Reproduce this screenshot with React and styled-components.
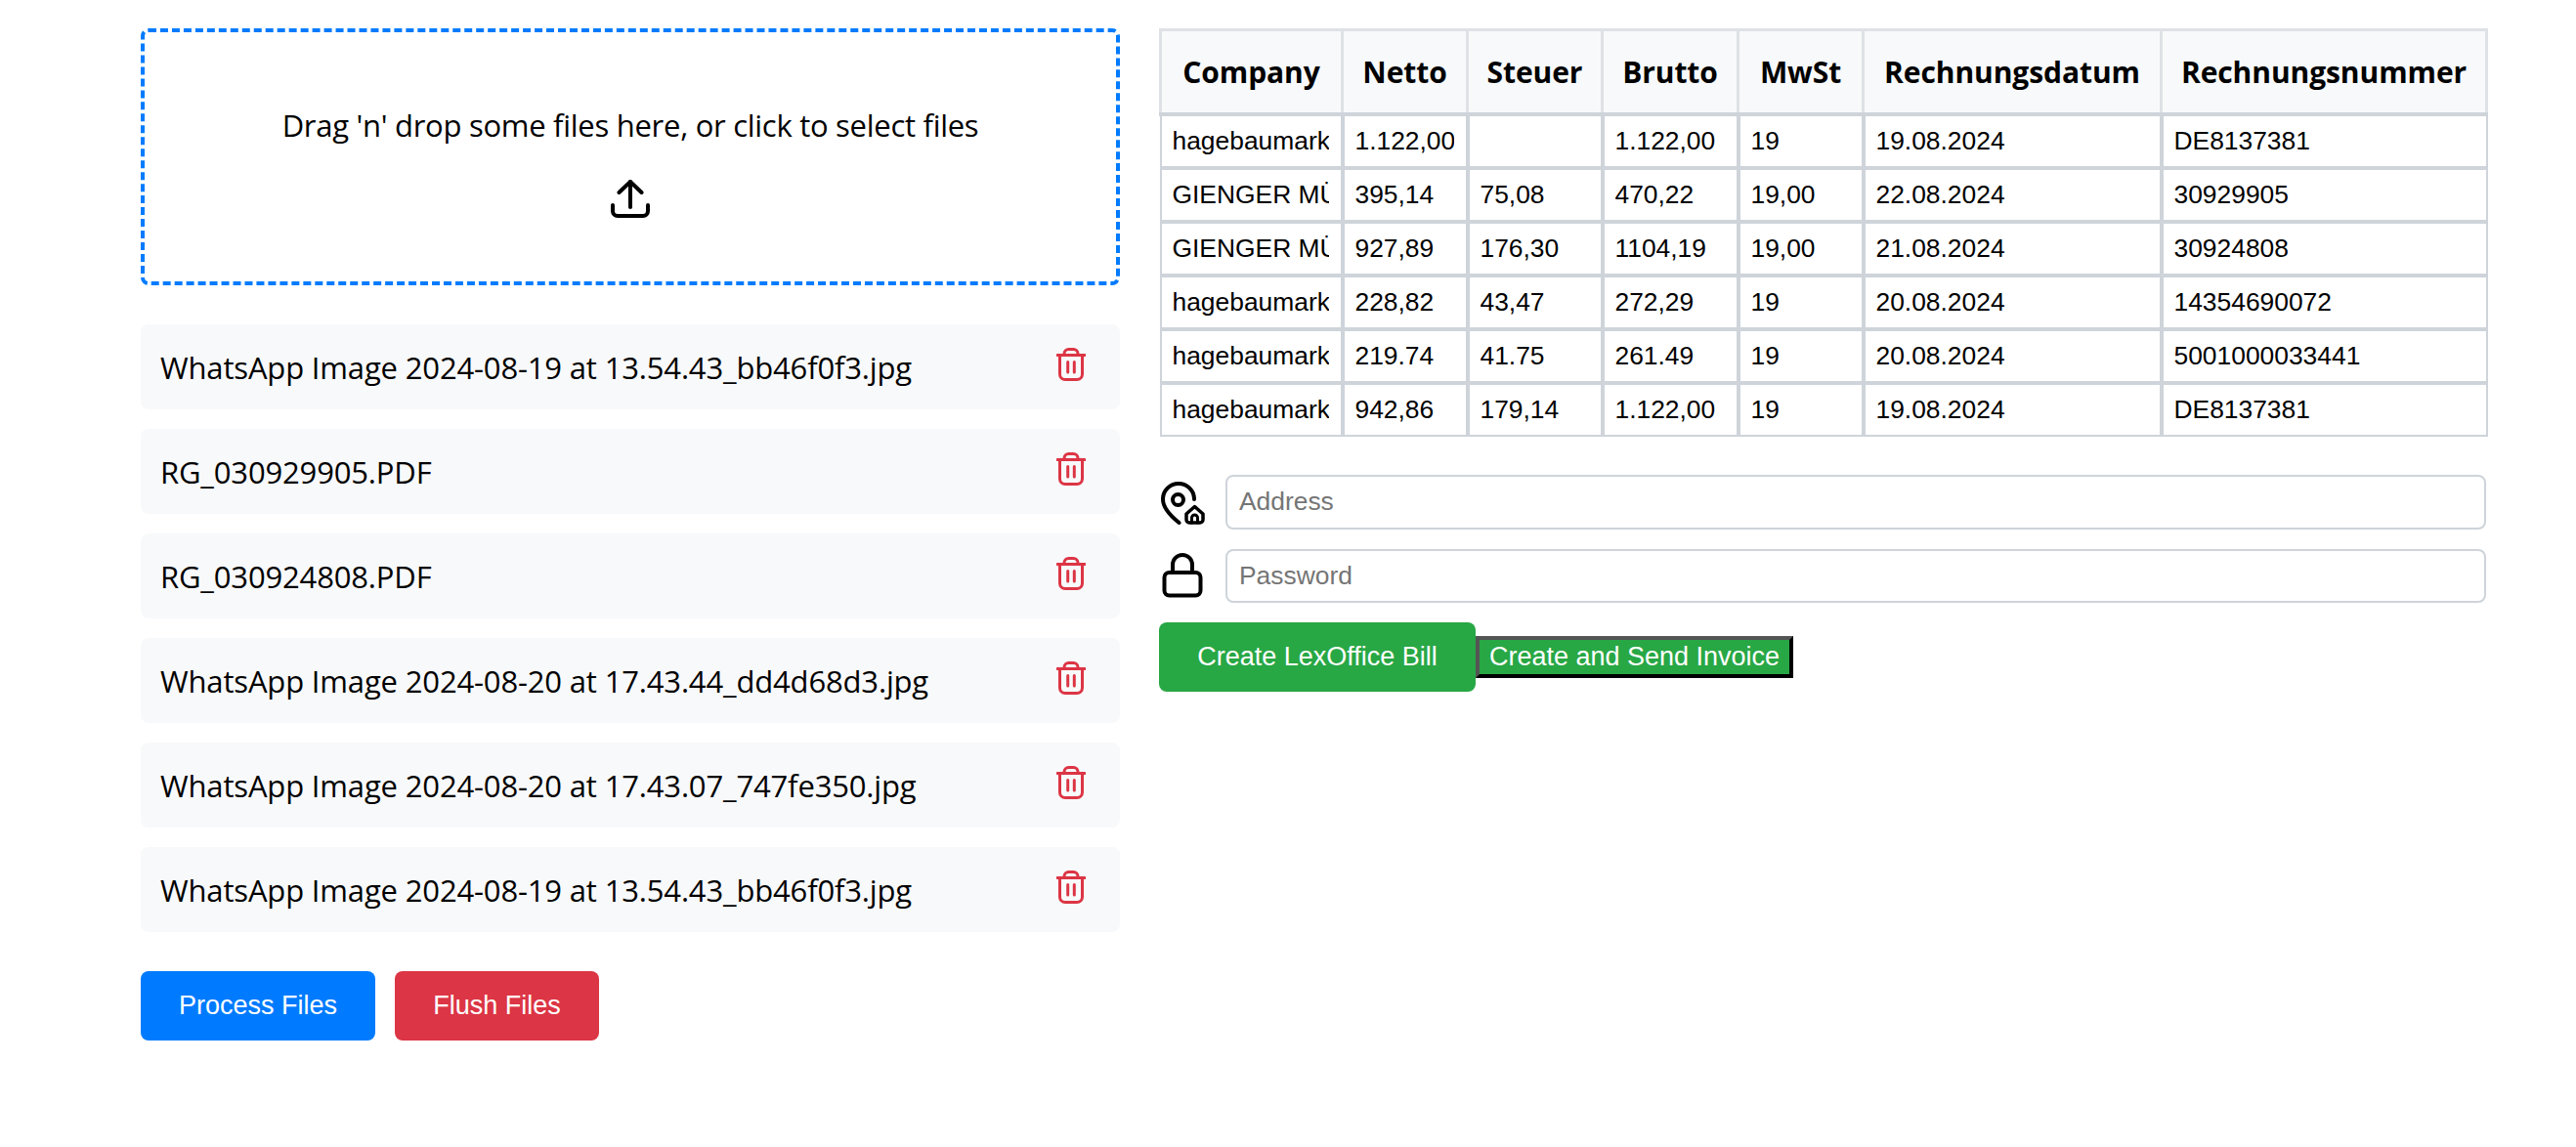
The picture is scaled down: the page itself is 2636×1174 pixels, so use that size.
import React from "react";
import styled, { createGlobalStyle } from "styled-components";

const BLUE = "#007bff";
const RED = "#dc3545";
const GREEN = "#28a745";
const LIGHT = "#f8f9fa";
const LINE = "#ced4da";
const HEAD_LINE = "#dee2e6";
const UI_FONT = '"Open Sans", "Noto Sans", sans-serif';
const FORM_FONT = '"Liberation Sans", Arial, sans-serif';

const GlobalStyle = createGlobalStyle`
  html, body {
    margin: 0;
    background: #fff;
    color: #000;
  }
`;

const Page = styled.div`
  display: flex;
  align-items: flex-start;
  gap: 40px;
  padding: 29px 92px 0 144px;
  height: 1174px;
  box-sizing: border-box;
`;

const LeftColumn = styled.div`
  width: 1002px;
  flex-shrink: 0;
`;

const RightColumn = styled.div`
  flex: 1;
  min-width: 0;
`;

const DropZone = styled.div`
  height: 263px;
  box-sizing: border-box;
  border: 4px dashed ${BLUE};
  border-radius: 8px;
  display: flex;
  flex-direction: column;
  align-items: center;
  padding-top: 75px;
  gap: 36px;
`;

const DropText = styled.p`
  margin: 0;
  font-family: ${UI_FONT};
  font-size: 31px;
  line-height: 40px;
  letter-spacing: -0.28px;
`;

const FileList = styled.div`
  display: flex;
  flex-direction: column;
  gap: 20px;
  margin-top: 40px;
`;

const FileRow = styled.div`
  height: 87px;
  box-sizing: border-box;
  padding: 0 35px 6px 20px;
  background: ${LIGHT};
  border-radius: 8px;
  display: flex;
  align-items: center;
  justify-content: space-between;
`;

const FileName = styled.span`
  font-family: ${UI_FONT};
  font-size: 31px;
  letter-spacing: -0.16px;
  position: relative;
  top: 3px;
`;

const ButtonRow = styled.div`
  display: flex;
  gap: 20px;
  margin-top: 40px;
`;

const Button = styled.button`
  height: 71px;
  width: ${(p) => p.$width}px;
  padding: 0;
  border: none;
  border-radius: 8px;
  background: ${(p) => p.$bg};
  color: #fff;
  font-family: ${FORM_FONT};
  font-size: 27px;
`;

const InvoiceTable = styled.table`
  width: 1357px;
  table-layout: fixed;
  border-collapse: collapse;
`;

const HeadCell = styled.th`
  height: 83px;
  padding: 0;
  background: ${LIGHT};
  border: 3px solid ${HEAD_LINE};
  font-family: ${UI_FONT};
  font-size: 30px;
  font-weight: 700;
  letter-spacing: -0.08px;
`;

const BodyCell = styled.td`
  height: 51px;
  padding: 0;
  border: 4px solid ${LINE};
  &:first-child {
    border-left-width: 2px;
  }
  &:last-child {
    border-right-width: 2px;
  }
  tr:last-child > & {
    border-bottom-width: 2px;
  }
`;

const CellInput = styled.input`
  display: block;
  width: 100%;
  height: 51px;
  box-sizing: border-box;
  padding: 0 12px 0 11px;
  border: none;
  outline: none;
  background: #fff;
  font-family: ${FORM_FONT};
  font-size: 26.4px;
  color: #000;
`;

const Form = styled.div`
  display: flex;
  flex-direction: column;
  gap: 20px;
  margin-top: 39px;
`;

const FieldRow = styled.div`
  display: flex;
  align-items: center;
  gap: 20px;
`;

const TextInput = styled.input`
  flex: 1;
  min-width: 0;
  height: 55.5px;
  box-sizing: border-box;
  padding: 0 12px;
  border: 2.5px solid ${LINE};
  border-radius: 8px;
  outline: none;
  font-family: ${FORM_FONT};
  font-size: 26.4px;
  &::placeholder {
    color: #757575;
  }
`;

const ActionRow = styled.div`
  display: flex;
  align-items: center;
`;

const CreateBill = styled.button`
  width: 324px;
  height: 71px;
  padding: 0;
  border: none;
  border-radius: 8px;
  background: ${GREEN};
  color: #fff;
  font-family: ${FORM_FONT};
  font-size: 27px;
`;

const SendInvoice = styled.button`
  width: 325px;
  height: 43px;
  padding: 0;
  box-sizing: border-box;
  border: 4px outset #000;
  background: ${GREEN};
  color: #fff;
  font-family: ${FORM_FONT};
  font-size: 27px;
  line-height: 1;
`;

const UploadIcon = () => (
  <svg width="40" height="40" viewBox="0 0 40 40" fill="none" stroke="#000" strokeWidth="4" strokeLinecap="round" strokeLinejoin="round">
    <path d="M20 2V28" />
    <path d="M8.5 13 20 2 31.5 13" />
    <path d="M2 26V32a5 5 0 0 0 5 5H33a5 5 0 0 0 5-5V26" />
  </svg>
);

const TrashIcon = () => (
  <svg width="30" height="34" viewBox="0 0 30 34" fill="none" stroke={RED} strokeWidth="3" strokeLinecap="round" strokeLinejoin="round">
    <path d="M1 7.5H29" />
    <path d="M8 7.5V6a4.5 4.5 0 0 1 4.5-4.5h5A4.5 4.5 0 0 1 22 6v1.5" />
    <path d="M3.5 7.5V27a5.5 5.5 0 0 0 5.5 5.5H21a5.5 5.5 0 0 0 5.5-5.5V7.5" />
    <path d="M11.7 14.5V25M18.3 14.5V25" />
  </svg>
);

const AddressIcon = () => (
  <svg width="48" height="50" viewBox="6 8 48 50" fill="none" stroke="#000" strokeWidth="4" strokeLinecap="round" strokeLinejoin="round">
    <path d="M42 30A16 16 0 1 0 10 30C10 40 19 48 26.5 54" />
    <circle cx="25.5" cy="30.5" r="5.5" />
    <path strokeWidth="3.5" d="M34 45 42.5 37.5 51 45V51a3 3 0 0 1-3 3H37a3 3 0 0 1-3-3Z" />
    <path strokeWidth="3" d="M39.5 54V49a3 3 0 0 1 6 0V54" />
  </svg>
);

const LockIcon = () => (
  <svg width="48" height="50" viewBox="6 85 48 50" fill="none" stroke="#000" strokeWidth="4" strokeLinecap="round" strokeLinejoin="round">
    <rect x="11.5" y="107" width="37" height="23.5" rx="5" />
    <path d="M20 107V99a10 10 0 0 1 20 0V107" />
  </svg>
);

const files = [
  "WhatsApp Image 2024-08-19 at 13.54.43_bb46f0f3.jpg",
  "RG_030929905.PDF",
  "RG_030924808.PDF",
  "WhatsApp Image 2024-08-20 at 17.43.44_dd4d68d3.jpg",
  "WhatsApp Image 2024-08-20 at 17.43.07_747fe350.jpg",
  "WhatsApp Image 2024-08-19 at 13.54.43_bb46f0f3.jpg",
];

const columns = [
  ["Company", 186],
  ["Netto", 128],
  ["Steuer", 138],
  ["Brutto", 139],
  ["MwSt", 128],
  ["Rechnungsdatum", 305],
  ["Rechnungsnummer", 333],
];

const rows = [
  ["hagebaumarkt", "1.122,00", "", "1.122,00", "19", "19.08.2024", "DE8137381"],
  ["GIENGER MÜNCHEN", "395,14", "75,08", "470,22", "19,00", "22.08.2024", "30929905"],
  ["GIENGER MÜNCHEN", "927,89", "176,30", "1104,19", "19,00", "21.08.2024", "30924808"],
  ["hagebaumarkt", "228,82", "43,47", "272,29", "19", "20.08.2024", "14354690072"],
  ["hagebaumarkt", "219.74", "41.75", "261.49", "19", "20.08.2024", "5001000033441"],
  ["hagebaumarkt", "942,86", "179,14", "1.122,00", "19", "19.08.2024", "DE8137381"],
];

const App = () => (
  <>
    <GlobalStyle />
    <Page>
      <LeftColumn>
        <DropZone>
          <DropText>Drag 'n' drop some files here, or click to select files</DropText>
          <UploadIcon />
        </DropZone>
        <FileList>
          {files.map((name, index) => (
            <FileRow key={index}>
              <FileName>{name}</FileName>
              <TrashIcon />
            </FileRow>
          ))}
        </FileList>
        <ButtonRow>
          <Button $bg={BLUE} $width={240}>Process Files</Button>
          <Button $bg={RED} $width={209}>Flush Files</Button>
        </ButtonRow>
      </LeftColumn>
      <RightColumn>
        <InvoiceTable>
          <colgroup>
            {columns.map(([name, width]) => (
              <col key={name} width={width} />
            ))}
          </colgroup>
          <thead>
            <tr>
              {columns.map(([name]) => (
                <HeadCell key={name}>{name}</HeadCell>
              ))}
            </tr>
          </thead>
          <tbody>
            {rows.map((row, rowIndex) => (
              <tr key={rowIndex}>
                {row.map((value, cellIndex) => (
                  <BodyCell key={cellIndex}>
                    <CellInput readOnly defaultValue={value} />
                  </BodyCell>
                ))}
              </tr>
            ))}
          </tbody>
        </InvoiceTable>
        <Form>
          <FieldRow>
            <AddressIcon />
            <TextInput placeholder="Address" />
          </FieldRow>
          <FieldRow>
            <LockIcon />
            <TextInput type="password" placeholder="Password" />
          </FieldRow>
          <ActionRow>
            <CreateBill>Create LexOffice Bill</CreateBill>
            <SendInvoice>Create and Send Invoice</SendInvoice>
          </ActionRow>
        </Form>
      </RightColumn>
    </Page>
  </>
);

export default App;
